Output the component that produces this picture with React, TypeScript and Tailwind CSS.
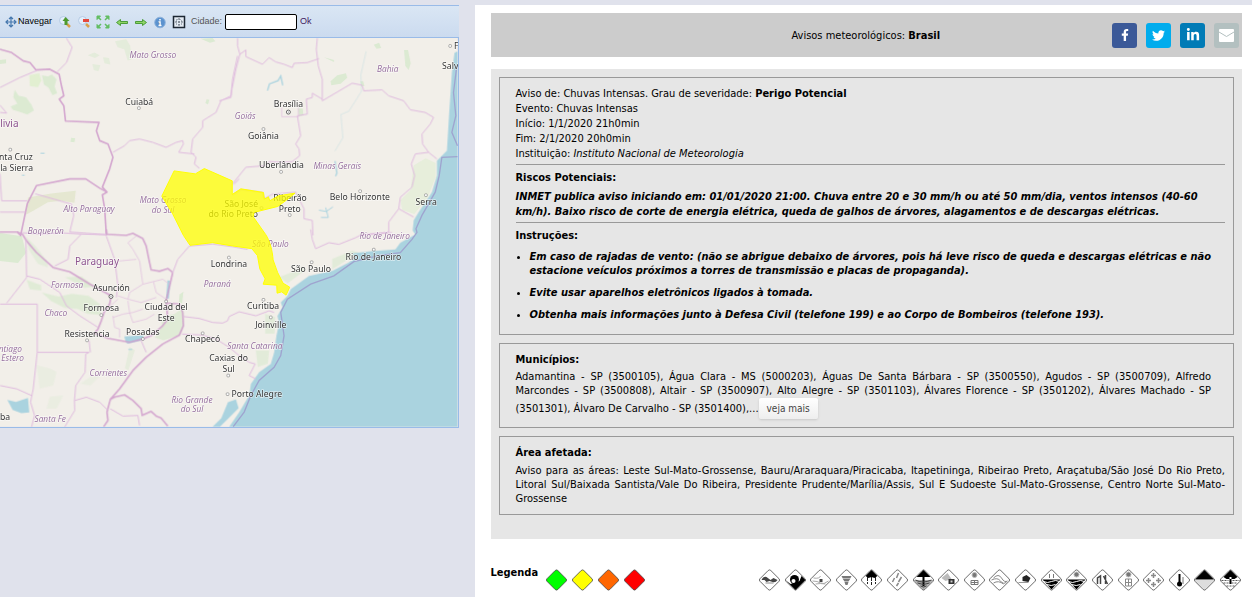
import React from "react";
import { FaFacebookF, FaTwitter, FaLinkedinIn } from "react-icons/fa";

const SHARE = [
    { key: "facebook", label: "Facebook", color: "bg-[#3b5998]", icon: <FaFacebookF size={12} /> },
    { key: "twitter", label: "Twitter", color: "bg-[#00aced]", icon: <FaTwitter size={13} /> },
    { key: "linkedin", label: "LinkedIn", color: "bg-[#007bb6]", icon: <FaLinkedinIn size={14} /> },
];

const LEVELS = ["#00ff00", "#ffff00", "#ff6600", "#ff0000"];

// Map labels: [text, x, y]
const CITIES: [string, number, number][] = [
    ["Cuiabá", 419, 202],
    ["nta Cruz", 48, 367],
    ["la Sierra", 50, 399],
    ["Brasília", 868, 208],
    ["Goiânia", 793, 304],
    ["Uberlândia", 847, 392],
    ["São José", 726, 508],
    ["do Rio Preto", 702, 540],
    ["Ribeirão", 873, 492],
    ["Preto", 872, 524],
    ["Belo Horizonte", 1083, 488],
    ["Serra", 1283, 502],
    ["Salv", 1355, 94],
    ["F", 1373, 33],
    ["Londrina", 689, 688],
    ["São Paulo", 936, 703],
    ["Rio de Janeiro", 1124, 668],
    ["Asunción", 335, 762],
    ["Formosa", 305, 822],
    ["Ciudad del", 500, 820],
    ["Este", 500, 853],
    ["Resistencia", 262, 899],
    ["Posadas", 430, 894],
    ["Chapecó", 610, 916],
    ["Curitiba", 792, 815],
    ["Joinville", 815, 872],
    ["Caxias do", 688, 973],
    ["Sul", 688, 1005],
    ["Porto Alegre", 773, 1080],
    ["ba", 15, 1149],
];

const STATES: [string, number, number][] = [
    ["Mato Grosso", 460, 61],
    ["Mato Grosso", 491, 498],
    ["do Sul", 491, 526],
    ["Alto Paraguay", 268, 524],
    ["Boquerón", 138, 590],
    ["Goiás", 738, 243],
    ["Bahia", 1167, 101],
    ["Minas Gerais", 1015, 395],
    ["Rio de Janeiro", 1158, 605],
    ["São Paulo", 814, 630],
    ["Paraná", 654, 748],
    ["Formosa", 202, 751],
    ["Chaco", 168, 837],
    ["ntiago", 31, 944],
    ["Estero", 38, 972],
    ["Corrientes", 326, 1016],
    ["Santa Fe", 151, 1157],
    ["Rio Grande", 578, 1098],
    ["do Sul", 578, 1126],
    ["Santa Catarina", 767, 935],
];

const DOTS: [number, number][] = [
    [418, 211], [31, 336], [793, 274], [846, 403], [872, 533], [787, 512], [1084, 461],
    [1282, 473], [1355, 24], [689, 661], [938, 675], [1125, 637], [305, 834], [500, 793],
    [262, 910], [430, 906], [610, 889], [793, 788], [815, 841], [687, 1016], [685, 1072],
];

const WarningMap = () => {
    return (
        <svg viewBox="0 0 1377 1170" className="block w-full" role="img" aria-label="Mapa">
            <rect width="1377" height="1170" fill="#f2efe9" />

            {/* Vegetation */}
            <g fill="#cfe8c6" opacity="0.65">
                <path d="M88 112l30-6 6 22 -10 20 -24 -4z" fill="#d8f0c4" />
                <path d="M44 156l12 18 22 4 16 22 8 18 -20 12 -24-8 -20-6 -6-10 20-8 -12-20z" />
                <path d="M126 112l18 4 12-6 14 14 -6 22 8 20 -14 6 -12-22 -14-10z" />
                <path d="M264 52l20-8 16 8 -14 8zM346 10l34-6 12 20 4 40 -12 4 -10-34 -20-6zM278 78l24 4 -6 18 -14-4zM310 58l18 2 4 20 -18-4z" opacity=".6" />
                <path d="M0 66l18-2 0 12 -18 2zM604 2l36-2 8 10 -16 4zM622 184l8 2 -4 14 -8-4zM214 300l12 2 -2 12 -12-2z" />
                <path d="M995 130l20-18 26-6 4 14 -20 18 -28 4zM1216 36l12 0 8 40 -6 20 -10-12zM975 58l30 8 0 6zM1125 20l16-6 6 16 -14 2zM1085 130l8 0 4 14 -10 2zM897 212l14 0 2 20 -14 4z" />
                <path d="M84 480l70-12 74-8 -4 36 -40-6 -40 4 -40 24 -26 14z" fill="#dde4c4" />
                <path d="M0 587l66 10 12 50 -24 30 -54-6z" />
                <path d="M80 600l30 30 30 40 4 20 -30-10 -28-44z" opacity=".6" />
                <path d="M80 728l44 16 0 16 -34-4zM126 766l50 12 40-8 50 6 34 24 4 34 -40-4 -30-14 -40 -4 -40-20zM196 720l50-2 40 30 -30 4z" opacity=".8" />
                <path d="M486 840l40-10 26-20 0 60 -10 24 -50 16 -26-8 20-34z" opacity=".8" />
                <path d="M540 772l12-8 -4 34 -10 0z" />
                <path d="M1245 384l36-22 30 14 0 44 -24 60 -40 50 -36-12 -6-30 30-30z" fill="#e0eed4" />
                <path d="M840 720l50-20 20-10 6 10 -50 38zM1000 665l60-25 20 6 -80 50zM798 830l30 10 -2 50 -28 0zM770 940l40 0 -4 40 -30 10z" opacity=".7" />
                <path d="M110 985l40 10 20 10 -10 40 -40 10zM150 1080l40-4 -20 40 -30 0zM242 1040l30-20 30-4 -30 30z" opacity=".35" />
                <path d="M390 930l16 10 -20 60 -10-6z" opacity=".5" />
            </g>

            {/* Ocean */}
            <path
                d="M1377 40L1368 44 1360 104 1352 224 1345 339 1315 369 1315 414 1300 464 1260 524 1245 549 1242 580 1250 591 1205 616 1190 636 1110 642 1060 648 1070 660 1050 675 1000 701 930 716 875 756 865 776 845 796 850 810 835 836 840 860 832 896 825 946 815 981 780 1006 755 1041 750 1076 720 1126 690 1170 1377 1170Z"
                fill="#aad3df"
            />
            <g fill="#aad3df">
                <path d="M22 1089l26 6 36-12 4 44 -24 2 -26-10z" />
                <path d="M686 1096l24-8 8 26 -30 30 -26 26 -22 0 26-26z" />
                <path d="M374 898l60-4 -10 16 -40 10 -6 -6z" />
                <path d="M386 936l12 0 0 3 -12 0zM122 345l12 0 0 3 -12 0zM66 411l8 0 0 3 -8 0z" />
            </g>
            <g fill="none" stroke="#aad3df" strokeWidth="4">
                <path d="M805 158l6-20 26-10 8-14 6 28" />
                <path d="M960 518l22 4 20-14 M966 540l22 0 -8-30" strokeWidth="3" />
                <path d="M1008 370l6 36 -4 10" />
                <path d="M508 730l-4 54" strokeWidth="8" />
                <path d="M1102 40l-16 70 2 50 -38 60 -24 10 6 70 -24 40" strokeWidth="1" />
            </g>

            {/* Country borders */}
            <g fill="none" stroke="#cf9bcb" strokeWidth="5" strokeLinejoin="round" opacity="0.85">
                <g transform="translate(0 -6)">
                    <path d="M0 40L35 50 70 75 90 80 108 102 150 100 178 115 185 150 192 180 178 190 192 210 197 256 298 260 290 285 300 315 325 325 340 365 330 400 308 455 322 470 308 478 315 520 320 600" />
                    <path d="M0 590L52 590 62 600 82 505 110 450 210 430 258 430 300 458 322 470" />
                </g>
                <g transform="translate(0 576)">
                    <path d="M52 8L68 15 80 35 110 70 160 115 210 128 270 165 335 200 330 225 315 245 305 275 295 300 285 312 325 328 390 340 430 330 455 320 490 290 505 270 500 215 520 130" />
                    <path d="M320 0L322 15 380 18 400 12 430 28 440 50 448 90 455 122 480 126 505 118 520 130" />
                    <path d="M500 222L540 225 550 250 552 290 540 318 490 345 440 385 400 425 360 480 332 512 322 550 325 575 312 594" />
                    <path d="M332 512L345 505 375 498 400 515 425 540 428 560 455 548 470 562 485 568 505 592" />
                </g>
            </g>

            {/* State borders */}
            <g fill="none" stroke="#dfbade" strokeWidth="3" strokeLinejoin="round">
                <g transform="translate(0 -6)">
                    <path d="M200 6L205 15 217 34 200 80 172 108M0 155L60 125 110 104M0 208L20 232 0 230M0 415L5 496 82 496M0 530L76 530" />
                    <path d="M340 350L375 330 390 315 420 310 460 320 500 335 530 320 550 315 552 325 538 350 585 355" />
                    <path d="M715 60L700 130 695 180 665 195 650 230 610 255 610 275 580 310 575 350 590 365 585 385 600 398" />
                    <path d="M106 475L215 506 222 540 210 590 320 598" />
                </g>
                <g transform="translate(660 -6)">
                    <path d="M55 6L55 30 62 55 50 100 38 160 35 185 0 195M62 55L80 42 80 62 130 85 150 65 170 78 195 85 220 95 225 82 265 80 300 68" />
                    <path d="M295 6L292 40 298 90 310 130 310 195 400 142 430 148 435 165 490 162 510 180 555 195 575 222 620 230 645 245 635 265 610 295 612 325 630 350 655 370" />
                    <path d="M310 190L280 172 280 185 262 190 265 235 235 240 245 300 230 325 240 340 242 360 220 378 190 380 150 378 140 390 80 395 60 420 40 445" />
                    <path d="M188 215L188 243 238 243 238 215" strokeWidth="2" />
                    <path d="M630 350L590 355 578 385 588 420 580 455 545 485 540 520 510 560 510 590 430 600M540 520L585 545" />
                    <path d="M40 478L65 462 130 470 135 490 160 476 230 470 255 520 255 550 280 555 282 600M44 446L60 430" />
                </g>
                <g transform="translate(0 576)">
                    <path d="M78 30L80 145 20 222M0 225L112 225 112 370 268 370 258 375 256 430 228 470 224 515 225 545 195 594M112 370L100 480 92 520 104 560 95 594M268 335L272 370" />
                    <path d="M80 140L120 150 180 190 200 230 240 260 295 295M0 470L50 480 95 500M225 515L260 505 300 520 325 545" />
                    <path d="M66 10L130 14 180 10 245 14 210 50 205 90 165 110M245 14L320 16M320 20L345 90 355 170 350 205" />
                    <path d="M410 20L385 40 400 60 420 95 425 130 430 165 490 150 510 165M360 95L410 90M355 200L385 210 425 220 470 205M385 210L390 190 430 165M462 158L470 190 500 210" strokeWidth="2" />
                    <path d="M340 260L345 295 360 300 360 325M340 265L370 255 400 250 430 240M385 215L390 250 400 280 440 270 465 255M310 250L355 210" strokeWidth="2" />
                    <path d="M520 130L535 90 570 50 640 44 700 52 745 60" />
                    <path d="M550 262L600 268 640 280 670 282 685 275 690 262 720 248 770 260 810 245 825 250" />
                    <path d="M548 315L610 318 650 330 690 355 720 380 750 400 768 405 750 440 770 450" />
                    <path d="M935 0L940 30 950 58 990 40 1020 45 1070 25 1090 15 1180 10M425 335L440 370M332 540L370 562 415 560 420 590" />
                </g>
            </g>

            {/* Maritime line */}
            <path
                d="M1375 84L1365 164 1372 234 1360 284 1377 324M1377 357L1330 359 1322 414 1310 464 1270 534 1252 574 1255 585 1240 606 1205 646 1140 655 1065 673 1005 716 935 741 865 786 845 826 855 896 845 956 825 991 780 1031 755 1076 735 1126 702 1170"
                fill="none"
                stroke="#9c9bcc"
                strokeWidth="4"
                opacity="0.85"
            />

            {/* City markers */}
            <g fill="#fff" stroke="#666" strokeWidth="1.5">
                {DOTS.map(([x, y]) => (
                    <rect key={`${x}-${y}`} x={x - 4} y={y - 4} width="8" height="8" rx="2" />
                ))}
                <circle cx="868" cy="223" r="6" strokeWidth="3" />
                <circle cx="868" cy="223" r="1" />
                <circle cx="334" cy="778" r="6" strokeWidth="3" />
                <circle cx="334" cy="778" r="1" />
            </g>

            <g
                fontFamily="'Noto Sans', 'Open Sans', sans-serif"
                fontSize="26"
                textAnchor="middle"
                stroke="#fff"
                strokeOpacity="0.6"
                strokeWidth="4"
                paintOrder="stroke"
            >
                <g fill="#333">
                    {CITIES.map(([name, x, y]) => (
                        <text key={name + y} x={x} y={y}>{name}</text>
                    ))}
                </g>
                <g fill="#936b9b" fontFamily="'Open Sans', sans-serif" fontStyle="italic" fontSize="25">
                    {STATES.map(([name, x, y]) => (
                        <text key={name + y} x={x} y={y}>{name}</text>
                    ))}
                </g>
                <g fill="#8d548f" fontSize="30">
                    <text x="28" y="268">livia</text>
                    <text x="292" y="683">Paraguay</text>
                </g>
            </g>

            {/* Warning area */}
            <path
                d="M524 400L588 409 615 393 699 430 699 471 725 454 793 465 796 485 808 478 812 490 838 475 888 467 862 488 836 507 764 525 762 538 800 592C812 610 820 640 822 668Q834 708 852 738L872 750 861 774 848 764 834 768 833 744 792 741 798 725 782 695 775 655 758 634 700 626 640 616 572 624 552 594 520 530 487 476Z"
                fill="#ffff00"
                fillOpacity="0.75"
                stroke="#ffff00"
                strokeWidth="3"
            />
        </svg>
    );
};

const ToolButton = ({ label, children }: { label: string; children: React.ReactNode }) => {
    return (
        <button type="button" aria-label={label} className="flex h-4 w-4 items-center justify-center">
            <svg width="16" height="16" viewBox="0 0 16 16">{children}</svg>
        </button>
    );
};

const Lens = () => (
    <>
        <circle cx="6.5" cy="6.5" r="4" fill="#e4effb" stroke="#b4cae4" />
        <path d="M10 10l3 3" stroke="#d9a04a" strokeWidth="2.5" />
    </>
);

const Toolbar = () => {
    return (
        <div className="flex h-[33px] items-center gap-[3px] border-y border-[#99bbe8] bg-linear-to-b from-[#dae6f4] to-[#cbdbef] pl-1 font-['Liberation_Sans',sans-serif] text-[9px] text-[#222]">
            <button type="button" className="flex items-center">
                <svg width="14" height="16" viewBox="0 0 14 16" fill="none" stroke="#4477ad" strokeWidth="1.2">
                    <path d="M7 3v10M2 8h10M5 5l2-2 2 2M5 11l2 2 2-2M4 6L2 8l2 2M10 6l2 2-2 2" />
                </svg>
                <span className="mr-[2px] text-black">Navegar</span>
            </button>
            <ToolButton label="Aproximar">
                <Lens />
                <path d="M8.5 3l4 4h-2v4h-3V7h-2z" fill="#4e9a2f" />
            </ToolButton>
            <ToolButton label="Afastar">
                <Lens />
                <path d="M7 5h6v3H7z" fill="#e5493d" />
            </ToolButton>
            <ToolButton label="Extensão total">
                <g fill="#62bd62" stroke="#62bd62">
                    <path d="M2 2h3.5L2 5.5zM14 2h-3.5L14 5.5zM2 14h3.5L2 10.5zM14 14h-3.5L14 10.5z" />
                    <path d="M3 3l3 3M13 3l-3 3M3 13l3-3M13 13l-3-3" strokeWidth="1.5" />
                </g>
            </ToolButton>
            <ToolButton label="Anterior">
                <path d="M2.5 8.5L6.500 5.5v2h7v2h-7v2z" fill="#8fd468" stroke="#41962c" strokeWidth=".9" />
            </ToolButton>
            <ToolButton label="Próximo">
                <path d="M13.5 8.5L9.500 5.5v2h-7v2h7v2z" fill="#8fd468" stroke="#41962c" strokeWidth=".9" />
            </ToolButton>
            <ToolButton label="Informações">
                <circle cx="8" cy="8.5" r="5.3" fill="#5b92cf" stroke="#8fb3dc" />
                <path d="M8 5v1.500M6.500 8H8v3.500M6.500 11.500h3" stroke="#fff" strokeWidth="1.500" />
            </ToolButton>
            <ToolButton label="Grade">
                <path d="M2.5 2.5h11v11h-11z" fill="#e4ebf3" stroke="#1c2733" strokeWidth="1.5" />
                <path d="M8 4v8M4 8h8" fill="none" stroke="#67717c" strokeDasharray="2 1" />
                <path d="M5.500 5.500h5v5h-5z" fill="none" stroke="#67717c" strokeDasharray="1 2" />
            </ToolButton>
            <label htmlFor="cidade" className="ml-px text-[#555]">Cidade:</label>
            <input id="cidade" type="text" className="h-4 w-[72px] rounded-[2px] border border-black bg-white px-1" />
            <button type="button" className="text-[#402060]">Ok</button>
        </div>
    );
};

// Pictograms of the legend, drawn on a 22x22 grid
const SIGNS: { name: string; art: React.ReactNode }[] = [
    { name: "Vendaval", art: <><path d="M3 11q2-4 5-3l4 3 3-2 4 2q-2 3-5 2l-3-1-3 1-2-2z" fill="#444" /><path d="M7 14h8" stroke="#888" /></> },
    { name: "Ressaca", art: <><path d="M1 11L11 21 21 11 17 7 15 12 6 15z" /><circle cx="10" cy="10.500" r="4.500" /><circle cx="9" cy="12" r="2" fill="#fff" /></> },
    { name: "Ventos", art: <><path d="M4 9q6 1 7-2M3 12q5 0 8 2t8-2M6 15q5-1 10 0" fill="none" stroke="#aaa" /><path d="M10 10h3v3h-3z" fill="#444" /></> },
    { name: "Tornado", art: <path d="M6 7h10l-1 2H7zM7 9.500h8l-2 3H9zM9 13h4l-1 3h-2z" fill="#777" /> },
    { name: "Granizo", art: <><path d="M11 1L5 7l3 2 3-1 3 1 3-2z" /><path d="M7 8v7M11 8v8M15 8v7" stroke="#222" strokeDasharray="4 1" /></> },
    { name: "Chuva", art: <path d="M12 4l-2 5M15 8l-3 5M8 9l-2 4M12 14l-2 3" stroke="#888" strokeWidth="1.5" /> },
    { name: "Tempestade", art: <><path d="M1 11L11 21 21 11z" fill="#aaa" /><path d="M11 1L4 8h14zM10 8h2v9h-2z" /><path d="M3 11q7 4 16 0M5 14q6 3 12 0M8 17q3 2 6 0" fill="none" stroke="#444" /></> },
    { name: "Deslizamento", art: <><path d="M4 9l6-5 4 6-6 2z" fill="#bbb" /><path d="M11 10h6v5h-6z" fill="#333" /><path d="M13 11.500h2v2h-2z" fill="#ccc" /></> },
    { name: "Baixa umidade", art: <><circle cx="11" cy="6" r="2.500" fill="#777" stroke="#bbb" /><path d="M7.500 11.500h7v4h-7zM7.500 13.500h7M11 11v5" fill="none" stroke="#777" /></> },
    { name: "Nevoeiro", art: <path d="M5 9q5-5 8 0t6 3M3 11q6-3 9 1t6 1M5 14q5-3 10 1" fill="none" stroke="#888" /> },
    { name: "Geada", art: <><path d="M8 8l4-2 4 3-2 4-6-1z" fill="#222" /><path d="M4 13.500h10" stroke="#999" /></> },
    { name: "Inundação", art: <><path d="M2 10.500h18l-9 10z" /><path d="M3 12.500q4 2 8 0t8 0M6 15.500q5 2 9 0" stroke="#fff" fill="none" /><path d="M9 5v4M13 5v4" stroke="#777" /></> },
    { name: "Enxurrada", art: <><path d="M2 10.500h18l-9 10z" /><path d="M3 12.500q4 2 8 0t8 0M6 15.500q5 2 9 0" stroke="#fff" fill="none" /><circle cx="11" cy="5.500" r="2.500" fill="#777" stroke="#bbb" /></> },
    { name: "Seca", art: <path d="M6 15V9l3-2v8M12 7l4 8M14 6v9" fill="none" stroke="#444" strokeWidth="1.500" /> },
    { name: "Onda de calor", art: <><circle cx="11" cy="5.500" r="2.500" fill="#777" stroke="#bbb" /><path d="M8 10h6v7H8zM11 10v7M8 13.500h6" fill="none" stroke="#888" /></> },
    { name: "Neve", art: <path d="M11 4v5M8.500 6.500h5M6 9v5M3.500 11.500h5M16 9v5M13.500 11.500h5M11 13v5M8.500 15.500h5" stroke="#888" strokeWidth="1.500" /> },
    { name: "Friagem", art: <><path d="M10 5h2v8h-2z" /><circle cx="11" cy="15" r="2.500" /><path d="M14.500 8v7" stroke="#777" /></> },
    { name: "Tempo severo", art: <><path d="M1 11L11 21 21 11z" fill="#ddd" /><path d="M11 1L1.500 10.500h19z" /></> },
    { name: "Chuvas intensas", art: <><path d="M11 1L4 8l3 2h8l3-2zM10 8h2v7h-2z" /><path d="M2 11.500h7M13 11.500h7M4 14h6M12 14h6M7 17h8" stroke="#555" strokeDasharray="2 1" /></> },
];

const Sign = ({ fill = "#fff", name, children }: { fill?: string; name: string; children?: React.ReactNode }) => {
    return (
        <svg width="23" height="22" viewBox="0 0 22 22" role="img" aria-label={name}>
            <path d="M9.7 1.5Q11 .3 12.3 1.5L20.5 9.7Q21.8 11 20.5 12.3L12.3 20.5Q11 21.7 9.7 20.5L1.5 12.3Q.2 11 1.5 9.7Z" fill={fill} />
            {children}
            <path d="M9.7 1.5Q11 .3 12.3 1.5L20.5 9.7Q21.8 11 20.5 12.3L12.3 20.5Q11 21.7 9.7 20.5L1.5 12.3Q.2 11 1.5 9.7Z" fill="none" stroke="#444" strokeWidth=".8" />
        </svg>
    );
};

const Share = () => {
    return (
        <div className="flex gap-[9px] pr-[3px]">
            {SHARE.map((item) => (
                <a key={item.key} href={`#${item.key}`} aria-label={item.label} className={`flex h-[25px] w-[25px] items-center justify-center rounded-[3px] text-white ${item.color}`}>
                    {item.icon}
                </a>
            ))}
            <a href="#email" aria-label="E-mail" className="flex h-[25px] w-[25px] items-center justify-center rounded-[3px] bg-[#b3c0c0]">
                <svg width="15" height="13" viewBox="0 0 15 13">
                    <rect width="15" height="13" rx="1" fill="#fff" />
                    <path d="M0 3l7.500 4.500L15 3" fill="none" stroke="#b3c0c0" />
                </svg>
            </a>
        </div>
    );
};

const App = () => {
    return (
        <div className="flex min-h-screen bg-[#e0e2ec] pt-[5px] font-['DejaVu_Sans_Condensed','DejaVu_Sans',sans-serif] text-[11px] leading-[15px] text-black">
            <aside className="w-[37.9%] shrink-0 pr-4">
                <Toolbar />
                <div className="border-r border-b border-[#99bbe8]">
                    <WarningMap />
                </div>
            </aside>

            <main className="min-w-0 flex-1 bg-white pt-2 pr-[10px] pl-4">
                <header className="flex h-11 items-center bg-[#ccc]">
                    <div className="flex-1 pl-[129px] text-center">
                        Avisos meteorológicos: <b>Brasil</b>
                    </div>
                    <Share />
                </header>

                <div className="mt-3 flex flex-col gap-2 bg-[#e6e6e6] px-2 pt-2 pb-6">
                    <section className="border border-[#999] pt-2 pr-2 pb-3 pl-4">
                        <p>Aviso de: Chuvas Intensas. Grau de severidade: <b>Perigo Potencial</b></p>
                        <p>Evento: Chuvas Intensas</p>
                        <p>Início: 1/1/2020 21h0min</p>
                        <p>Fim: 2/1/2020 20h0min</p>
                        <p>Instituição: <i>Instituto Nacional de Meteorologia</i></p>
                        <hr className="mt-[3px] mb-[5px] border-[#999]" />
                        <h2 className="font-bold">Riscos Potenciais:</h2>
                        <p className="mt-1 font-bold italic">
                            INMET publica aviso iniciando em: 01/01/2020 21:00. Chuva entre 20 e 30 mm/h ou até 50 mm/dia, ventos intensos (40-60 km/h). Baixo risco de corte de energia elétrica, queda de galhos de árvores, alagamentos e de descargas elétricas.
                        </p>
                        <hr className="mt-[3px] mb-[5px] border-[#999]" />
                        <h2 className="font-bold">Instruções:</h2>
                        <ul className="mt-[7px] flex list-disc flex-col gap-2 pl-[14px] leading-[14px] font-bold italic">
                            <li>Em caso de rajadas de vento: (não se abrigue debaixo de árvores, pois há leve risco de queda e descargas elétricas e não estacione veículos próximos a torres de transmissão e placas de propaganda).</li>
                            <li>Evite usar aparelhos eletrônicos ligados à tomada.</li>
                            <li>Obtenha mais informações junto à Defesa Civil (telefone 199) e ao Corpo de Bombeiros (telefone 193).</li>
                        </ul>
                    </section>

                    <section className="border border-[#999] pt-2 pr-[22px] pb-2 pl-4">
                        <h2 className="font-bold">Municípios:</h2>
                        <p className="mt-[3px] text-justify leading-[14px]">
                            Adamantina - SP (3500105), Água Clara - MS (5000203), Águas De Santa Bárbara - SP (3500550), Agudos - SP (3500709), Alfredo Marcondes - SP (3500808), Altair - SP (3500907), Alto Alegre - SP (3501103), Álvares Florence - SP (3501202), Álvares Machado - SP (3501301), Álvaro De Carvalho - SP (3501400),...
                            <button type="button" className="h-[21px] rounded-[2px] bg-linear-to-b from-white to-[#eee] px-2 align-middle text-[10px] text-[#444] shadow-sm">veja mais</button>
                        </p>
                    </section>

                    <section className="border border-[#999] pt-2 pr-2 pb-2 pl-4">
                        <h2 className="font-bold">Área afetada:</h2>
                        <p className="mt-1 text-justify leading-[14px]">
                            Aviso para as áreas: Leste Sul-Mato-Grossense, Bauru/Araraquara/Piracicaba, Itapetininga, Ribeirao Preto, Araçatuba/São José Do Rio Preto, Litoral Sul/Baixada Santista/Vale Do Ribeira, Presidente Prudente/Marília/Assis, Sul E Sudoeste Sul-Mato-Grossense, Centro Norte Sul-Mato-Grossense
                        </p>
                    </section>
                </div>

                <footer className="flex items-end justify-between pt-[26px]">
                    <div className="flex gap-[3px]">
                        <b className="mr-1">Legenda</b>
                        {LEVELS.map((color) => (
                            <span key={color} className="pt-1">
                                <Sign fill={color} name="Grau de severidade" />
                            </span>
                        ))}
                    </div>
                    <div className="flex w-[484px] justify-between">
                        {SIGNS.map((sign) => (
                            <Sign key={sign.name} name={sign.name}>{sign.art}</Sign>
                        ))}
                    </div>
                </footer>
            </main>
        </div>
    );
};

export default App;
